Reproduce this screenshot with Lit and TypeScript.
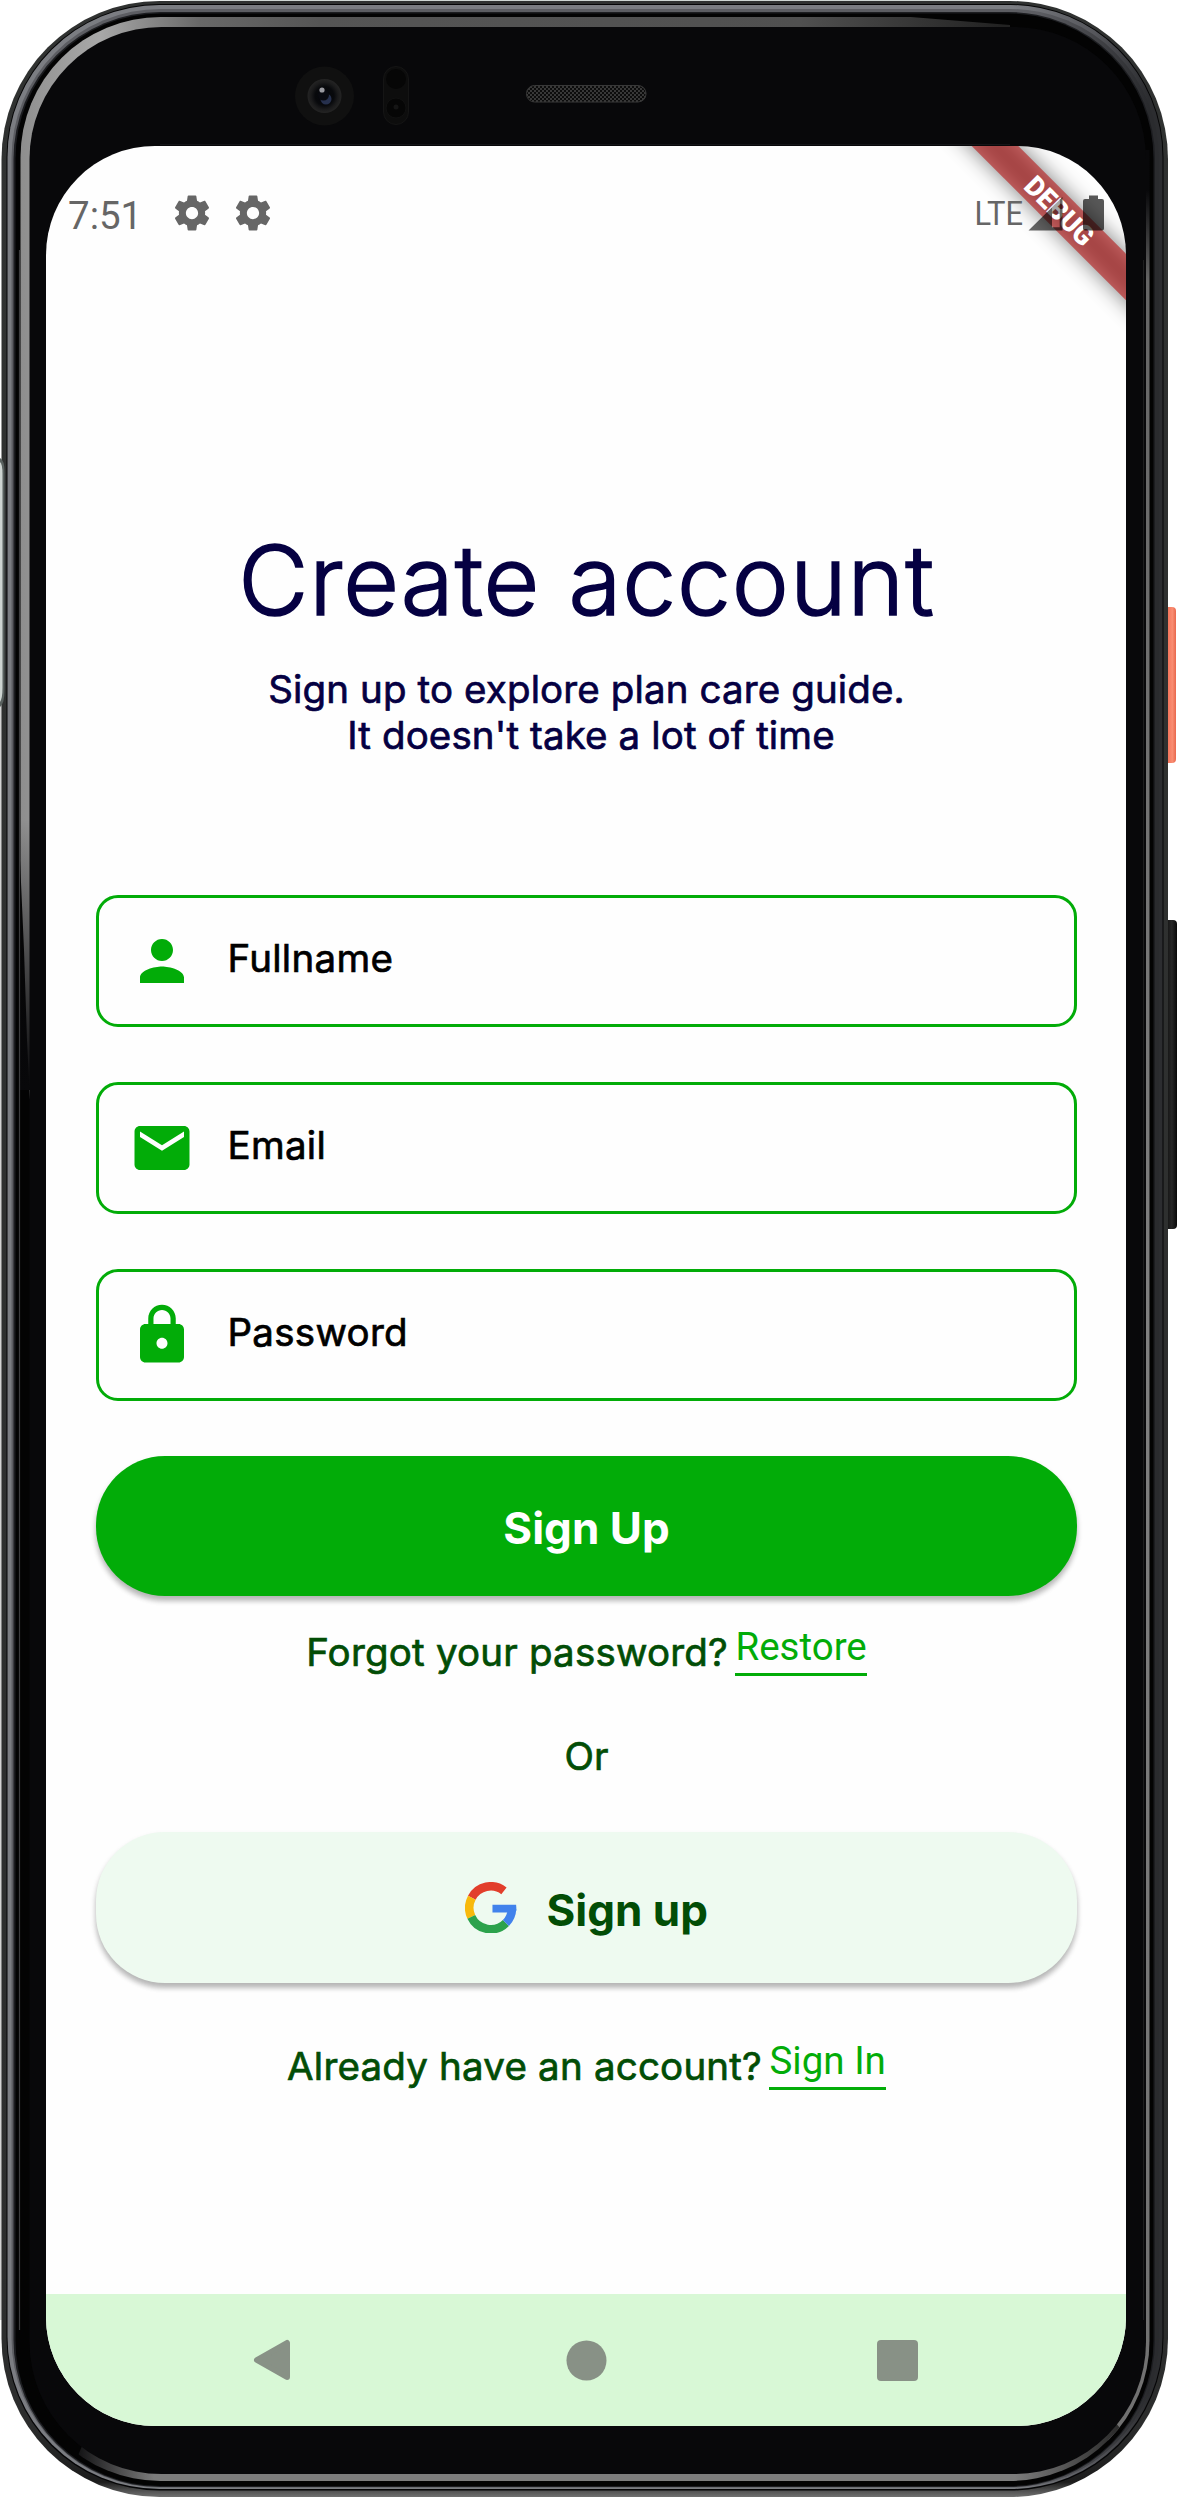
import { LitElement, html, css } from "lit";
import { customElement, property } from "lit/decorators.js";

const ICONS: Record<string, string> = {
  person:
    "M12 12c2.21 0 4-1.79 4-4s-1.79-4-4-4-4 1.79-4 4 1.79 4 4 4zm0 2c-2.67 0-8 1.34-8 4v2h16v-2c0-2.66-5.33-4-8-4z",
  email:
    "M20 4H4c-1.1 0-1.99.9-1.99 2L2 18c0 1.1.9 2 2 2h16c1.1 0 2-.9 2-2V6c0-1.1-.9-2-2-2zm0 4l-8 5-8-5V6l8 5 8-5v2z",
  lock:
    "M18 8h-1V6c0-2.76-2.24-5-5-5S7 3.24 7 6v2H6c-1.1 0-2 .9-2 2v10c0 1.1.9 2 2 2h12c1.1 0 2-.9 2-2V10c0-1.1-.9-2-2-2zm-6 9c-1.1 0-2-.9-2-2s.9-2 2-2 2 .9 2 2-.9 2-2 2zm3.1-9H8.9V6c0-1.71 1.39-3.1 3.1-3.1 1.71 0 3.1 1.39 3.1 3.1v2z",
  settings:
    "M19.43 12.98c.04-.32.07-.64.07-.98s-.03-.66-.07-.98l2.11-1.65c.19-.15.24-.42.12-.64l-2-3.46c-.12-.22-.39-.3-.61-.22l-2.49 1c-.52-.4-1.08-.73-1.69-.98l-.38-2.65C14.46 2.18 14.25 2 14 2h-4c-.25 0-.46.18-.49.42l-.38 2.65c-.61.25-1.17.59-1.69.98l-2.49-1c-.23-.09-.49 0-.61.22l-2 3.46c-.13.22-.07.49.12.64l2.11 1.65c-.04.32-.07.65-.07.98s.03.66.07.98l-2.11 1.65c-.19.15-.24.42-.12.64l2 3.46c.12.22.39.3.61.22l2.49-1c.52.4 1.08.73 1.69.98l.38 2.65c.03.24.24.42.49.42h4c.25 0 .46-.18.49-.42l.38-2.65c.61-.25 1.17-.59 1.69-.98l2.49 1c.23.09.49 0 .61-.22l2-3.46c.12-.22.07-.49-.12-.64l-2.11-1.65zM12 15.5c-1.93 0-3.5-1.57-3.5-3.5s1.57-3.5 3.5-3.5 3.5 1.57 3.5 3.5-1.57 3.500-3.500 3.500z",
};

/** Handset body: metal ring, bezel highlights, buttons, camera and speaker. */
@customElement("phone-frame")
class PhoneFrame extends LitElement {
  static styles = css`
    :host {
      display: block;
    }
    svg {
      display: block;
    }
  `;
  render() {
    return html`<svg width="1178" height="2498" viewBox="0 0 1178 2498">
      <defs>
        <linearGradient id="outer" x1="0" y1="0" x2="0" y2="1">
          <stop offset="0" stop-color="#303231" />
          <stop offset=".97" stop-color="#2c2d2d" />
          <stop offset=".994" stop-color="#1c1c1c" />
          <stop offset=".997" stop-color="#4a4a4a" />
          <stop offset="1" stop-color="#707070" />
        </linearGradient>
        <linearGradient id="metal" x1="0" y1="0" x2="1178" y2="0" gradientUnits="userSpaceOnUse">
          <stop offset="0" stop-color="#7b7d82" />
          <stop offset=".86" stop-color="#7b7d82" />
          <stop offset=".93" stop-color="#55565b" />
          <stop offset=".975" stop-color="#2c2d30" />
        </linearGradient>
        <linearGradient id="metalInner" x1="0" y1="0" x2="1178" y2="0" gradientUnits="userSpaceOnUse">
          <stop offset="0" stop-color="#5c5d62" />
          <stop offset=".88" stop-color="#5c5d62" />
          <stop offset=".975" stop-color="#2a2b2e" />
        </linearGradient>
        <linearGradient id="glow" x1="0" y1="0" x2="1000" y2="0" gradientUnits="userSpaceOnUse">
          <stop offset="0" stop-color="#858585" />
          <stop offset=".04" stop-color="#969696" />
          <stop offset=".1" stop-color="#a8a8a8" />
          <stop offset=".2" stop-color="#686868" />
          <stop offset=".32" stop-color="#555" />
          <stop offset=".8" stop-color="#505050" />
          <stop offset="1" stop-color="#222" />
        </linearGradient>
        <linearGradient id="fadeLeft" x1="0" y1="820" x2="0" y2="1090" gradientUnits="userSpaceOnUse">
          <stop offset="0" stop-color="#08080a" stop-opacity="0" />
          <stop offset="1" stop-color="#08080a" />
        </linearGradient>
        <linearGradient id="sideLine" x1="0" y1="190" x2="0" y2="2470" gradientUnits="userSpaceOnUse">
          <stop offset="0" stop-color="#08080a" />
          <stop offset=".04" stop-color="#666" />
          <stop offset=".5" stop-color="#808080" />
          <stop offset="1" stop-color="#707070" />
        </linearGradient>
        <linearGradient id="baseLine" x1="70" y1="0" x2="1120" y2="0" gradientUnits="userSpaceOnUse">
          <stop offset="0" stop-color="#08080a" />
          <stop offset=".08" stop-color="#7c7c7c" />
          <stop offset=".9" stop-color="#7c7c7c" />
          <stop offset="1" stop-color="#2a2a2a" />
        </linearGradient>
        <linearGradient id="power" x1="0" y1="0" x2="1" y2="0">
          <stop offset="0" stop-color="#c9503a" />
          <stop offset=".3" stop-color="#f4735a" />
          <stop offset=".7" stop-color="#f98d72" />
          <stop offset="1" stop-color="#e8684d" />
        </linearGradient>
        <linearGradient id="volume" x1="0" y1="0" x2="1" y2="0">
          <stop offset="0" stop-color="#0a0a0a" />
          <stop offset=".6" stop-color="#262626" />
          <stop offset="1" stop-color="#080808" />
        </linearGradient>
        <radialGradient id="lens">
          <stop offset="0" stop-color="#05060a" />
          <stop offset=".55" stop-color="#08090c" />
          <stop offset=".8" stop-color="#1b1b1c" />
          <stop offset="1" stop-color="#242424" />
        </radialGradient>
        <pattern id="mesh" width="4" height="4" patternUnits="userSpaceOnUse">
          <rect width="4" height="4" fill="#0c0c0c" />
          <circle cx="1" cy="1" r=".95" fill="#4a4a4a" />
          <circle cx="3" cy="3" r=".95" fill="#4a4a4a" />
        </pattern>
        <clipPath id="glowArea">
          <path d="M0 0H700L1010 25V60H300L200 240H60V1100H30L27 1040L24 950L20 860H0z" />
        </clipPath>
        <clipPath id="rightArea">
          <path d="M1100 150H1178V2400L1120 2450L1060 2400z" />
        </clipPath>
        <clipPath id="baseArea">
          <path d="M60 2498L110 2380H1080L1130 2440V2498z" />
        </clipPath>
      </defs>

      <rect x="180" y="0" width="790" height="3" fill="#cfd6d3" />
      <rect x="0" y="460" width="3" height="1860" fill="#d2d2d2" />
      <rect x="1164" y="607" width="12" height="156" rx="4" fill="url(#power)" />
      <rect x="1164" y="920" width="13" height="309" rx="4" fill="url(#volume)" />

      <rect x="1.5" y="1" width="1166.5" height="2496" rx="158" fill="url(#outer)" />
      <path d="M0 458Q4.5 460 4.5 472V690Q4.500 704 0 707z" fill="#59615f" />
      <path d="M0 462Q2.500 464 2.500 474V688Q2.500 698 0 702z" fill="#cdd4d1" />
      <rect x="6.5" y="4" width="1157" height="2486.5" rx="153" fill="#050506" />
      <rect x="7.5" y="5" width="1155" height="2484" rx="152" fill="url(#metal)" />
      <rect x="11.5" y="9" width="1147.5" height="2478.5" rx="149" fill="url(#metalInner)" />
      <rect x="13.5" y="12" width="1141.5" height="2475" rx="147" fill="#1c1d20" />
      <rect x="15.5" y="13.5" width="1138" height="2472.5" rx="145" fill="#030303" />

      <g clip-path="url(#glowArea)">
        <rect x="20.5" y="17" width="1129" height="2464" rx="140" fill="url(#glow)" />
      </g>
      <g clip-path="url(#rightArea)">
        <rect x="20.5" y="17" width="1129" height="2464" rx="140" fill="url(#sideLine)" />
      </g>
      <g clip-path="url(#baseArea)">
        <rect x="20.5" y="17" width="1129" height="2464" rx="140" fill="url(#baseLine)" />
      </g>
      <rect x="20" y="820" width="12" height="270" fill="url(#fadeLeft)" />
      <path d="M19.5 250V2330" stroke="#3d3d3f" stroke-width="1.2" />
      <rect x="29.5" y="27" width="1116.5" height="2447" rx="132" fill="#08080a" />
      <path d="M1143.5 260V2320" stroke="#1e1e1f" stroke-width="1" />
      <path d="M160 144.5H1010" stroke="#151518" stroke-width="1" />

      <circle cx="324.5" cy="96" r="29.5" fill="#101010" />
      <circle cx="324.5" cy="96" r="17" fill="url(#lens)" />
      <circle cx="326" cy="99" r="5.5" fill="#26304d" />
      <circle cx="323.500" cy="95" r="5.5" fill="#090a10" />
      <circle cx="322" cy="90" r="2.6" fill="#9a9aa0" />
      <rect x="383.5" y="66.5" width="25" height="58" rx="12.5" fill="#0d0d0d" stroke="#151515" />
      <circle cx="396" cy="79" r="10" fill="#060606" />
      <circle cx="396" cy="108" r="10" fill="#060606" stroke="#111" />
      <circle cx="396" cy="107" r="2.5" fill="#151515" />
      <rect x="526.5" y="85.5" width="119.5" height="16.5" rx="8" fill="url(#mesh)" stroke="#383838" />
    </svg>`;
  }
}

@customElement("material-icon")
class MaterialIcon extends LitElement {
  @property() name = "person";
  @property({ type: Number }) size = 66;
  static styles = css`
    :host {
      display: block;
      flex: none;
    }
    svg {
      display: block;
    }
  `;
  render() {
    return html`<svg width=${this.size} height=${this.size} viewBox="0 0 24 24">
      <path d=${ICONS[this.name]} fill="currentColor" />
    </svg>`;
  }
}

@customElement("app-root")
class AppRoot extends LitElement {
  private fields = [
    { icon: "person", label: "Fullname" },
    { icon: "email", label: "Email" },
    { icon: "lock", label: "Password" },
  ];

  static styles = css`
    :host {
      display: block;
      width: 1178px;
      height: 2498px;
      overflow: hidden;
      background: #fff;
      font-family: Inter, "Liberation Sans", sans-serif;
    }
    .phone {
      display: grid;
      grid-template-columns: 1178px;
      grid-template-rows: 2498px;
    }
    .phone > * {
      grid-area: 1 / 1;
    }
    .screen {
      position: relative;
      display: flex;
      flex-direction: column;
      box-sizing: border-box;
      width: 1080px;
      height: 2280px;
      margin: 146px 0 0 46px;
      border-radius: 109px;
      background: #fefefe;
      overflow: hidden;
    }
    .ribbon {
      position: absolute;
      top: 0;
      right: 0;
    }
    .status {
      position: relative;
      display: flex;
      align-items: center;
      height: 134px;
      padding: 0 20px 0 22px;
      box-sizing: border-box;
      color: #666;
    }
    .time {
      font: 400 38.5px/46px Roboto, sans-serif;
      padding-top: 5px;
      width: 103px;
    }
    .gears {
      display: flex;
      gap: 19px;
    }
    .signals {
      margin-left: auto;
    }
    .body {
      flex: 1;
      display: flex;
      flex-direction: column;
      padding: 240px 49px 0 50px;
    }
    h1 {
      margin: 0;
      text-align: center;
      font-size: 96.25px;
      line-height: 120px;
      font-weight: 300;
      letter-spacing: 0.98px;
      -webkit-text-stroke: 1.6px #050042;
      color: #050042;
    }
    .lead {
      margin: 26px 0 0;
      text-align: center;
      font-size: 38.5px;
      line-height: 46px;
      font-weight: 400;
      letter-spacing: 0.12px;
      -webkit-text-stroke: 0.7px #050042;
      color: #050042;
    }
    .second {
      padding-left: 9px;
    }
    .fields {
      display: flex;
      flex-direction: column;
      gap: 55px;
      margin-top: 137px;
    }
    .field {
      display: flex;
      align-items: center;
      box-sizing: border-box;
      height: 132px;
      padding-left: 30px;
      border: 3px solid #02ac08;
      border-radius: 22px;
      color: #02ac08;
    }
    .label {
      margin-left: 32.5px;
      padding-bottom: 6px;
      font-size: 38.5px;
      line-height: 46px;
      letter-spacing: 0.28px;
      -webkit-text-stroke: 0.7px #000;
      color: #000;
    }
    .btn {
      display: flex;
      align-items: center;
      justify-content: center;
      gap: 30px;
      border-radius: 69px;
      font-size: 44px;
      line-height: 54px;
      font-weight: 700;
      box-shadow: 0 5px 5px rgba(0, 0, 0, 0.18), 0 4px 6px rgba(0, 0, 0, 0.14);
    }
    .btn span {
      padding-top: 4px;
    }
    .primary {
      height: 140px;
      margin-top: 55px;
      background: #02ac08;
      color: #fff;
    }
    .google {
      height: 151px;
      margin-top: 53px;
      background: #eefaf0;
      color: #024d06;
    }
    .google span {
      padding-top: 5px;
    }
    .prompt {
      display: flex;
      justify-content: center;
      align-items: flex-start;
      gap: 7.5px;
      height: 52px;
      font-size: 38.5px;
      line-height: 46px;
      letter-spacing: 0.2px;
      color: #024d06;
      -webkit-text-stroke: 0.7px #024d06;
    }
    .prompt .question {
      padding-top: 4.6px;
    }
    .link {
      box-sizing: border-box;
      height: 52px;
      border-bottom: 3px solid #02ac08;
      font: 400 38.5px/45px Roboto, sans-serif;
      letter-spacing: 0;
      color: #02ac08;
      -webkit-text-stroke: 0;
    }
    .forgot {
      margin-top: 28px;
    }
    .or {
      margin-top: 57px;
      text-align: center;
      font-size: 38.5px;
      line-height: 46px;
      color: #024d06;
      -webkit-text-stroke: 0.7px #024d06;
    }
    .already {
      margin-top: 55px;
    }
    .nav {
      display: grid;
      grid-template-columns: 452px 176px 446px;
      align-items: center;
      height: 132px;
      background: #d8f8d6;
    }
    .nav svg {
      display: block;
      justify-self: center;
    }
  `;

  private ribbon() {
    return html`<svg class="ribbon" width="220" height="220" viewBox="906 146 220 220">
      <defs>
        <filter id="soft" x="-30%" y="-80%" width="160%" height="260%">
          <feGaussianBlur stdDeviation="10.9" />
        </filter>
      </defs>
      <g transform="translate(1059.7 210.7) rotate(45)">
        <rect x="-150" y="-16.5" width="300" height="33" fill="#000" fill-opacity=".5" filter="url(#soft)" />
        <rect x="-150" y="-16.5" width="300" height="33" fill="#b71c1c" fill-opacity=".627" />
        <text
          x="0"
          y="10"
          text-anchor="middle"
          textLength="85"
          lengthAdjust="spacingAndGlyphs"
          font-family="Roboto, sans-serif"
          font-size="28"
          font-weight="900"
          fill="#fff"
        >DEBUG</text>
      </g>
    </svg>`;
  }

  private signals() {
    return html`<svg class="signals" width="136" height="44" viewBox="970 191 136 44">
      <text
        x="974.5"
        y="225.3"
        textLength="48.5"
        lengthAdjust="spacingAndGlyphs"
        font-family="Roboto, sans-serif"
        font-size="33.5"
        fill="#666"
      >LTE</text>
      <path
        fill-rule="evenodd"
        d="M1028.5 230.5L1062.5 197V230.5zM1052 207.3V227.3H1059.7V199.7z"
        fill="#000"
        fill-opacity=".6"
      />
      <path d="M1052 207.3L1059.7 199.7V214H1052z" fill="#000" fill-opacity=".35" />
      <path
        d="M1089 199V195.5H1098V199H1102Q1104 199 1104 201V228.5Q1104 230.5 1102 230.5H1085Q1083 230.5 1083 228.5V201Q1083 199 1085 199z"
        fill="#000"
        fill-opacity=".65"
      />
    </svg>`;
  }

  private googleLogo() {
    return html`<svg width="51.5" height="51.5" viewBox="0 0 48 48" fill="none" stroke-width="8">
      <path d="M6.34 14.61A20 20 0 0 1 36.3 8.24" stroke="#e23e2b" />
      <path d="M5.87 32.45A20 20 0 0 1 6.34 14.61" stroke="#f8b90c" />
      <path d="M38.14 38.14A20 20 0 0 1 5.87 32.45" stroke="#2ca24c" />
      <path d="M43.8 25A20 20 0 0 1 38.14 38.14" stroke="#4182ec" />
      <path d="M25.6 21.3H47.6Q48 24 47.8 27L40 28.5H25.6z" fill="#4182ec" />
    </svg>`;
  }

  render() {
    return html`<div class="phone">
      <phone-frame></phone-frame>
      <div class="screen">
        ${this.ribbon()}
        <div class="status">
          <div class="time">7:51</div>
          <div class="gears">
            <material-icon name="settings" size="42"></material-icon>
            <material-icon name="settings" size="42"></material-icon>
          </div>
          ${this.signals()}
        </div>
        <div class="body">
          <h1>Create account</h1>
          <p class="lead">
            Sign up to explore plan care guide.<br /><span class="second">It doesn't take a lot of time</span>
          </p>
          <div class="fields">
            ${this.fields.map(
              (f) => html`<div class="field">
                <material-icon name=${f.icon}></material-icon>
                <span class="label">${f.label}</span>
              </div>`
            )}
          </div>
          <div class="btn primary"><span>Sign Up</span></div>
          <div class="prompt forgot">
            <span class="question">Forgot your password?</span>
            <span class="link">Restore</span>
          </div>
          <div class="or">Or</div>
          <div class="btn google">${this.googleLogo()}<span>Sign up</span></div>
          <div class="prompt already">
            <span class="question">Already have an account?</span>
            <span class="link">Sign In</span>
          </div>
        </div>
        <div class="nav">
          <svg width="46" height="46" viewBox="0 0 46 46">
            <path d="M8 23L38 6V40z" fill="#889186" stroke="#889186" stroke-width="6" stroke-linejoin="round" />
          </svg>
          <svg width="41" height="41"><circle cx="20.5" cy="20.5" r="20" fill="#889186" /></svg>
          <svg width="41" height="41"><rect width="41" height="41" rx="4" fill="#889186" /></svg>
        </div>
      </div>
    </div>`;
  }
}
